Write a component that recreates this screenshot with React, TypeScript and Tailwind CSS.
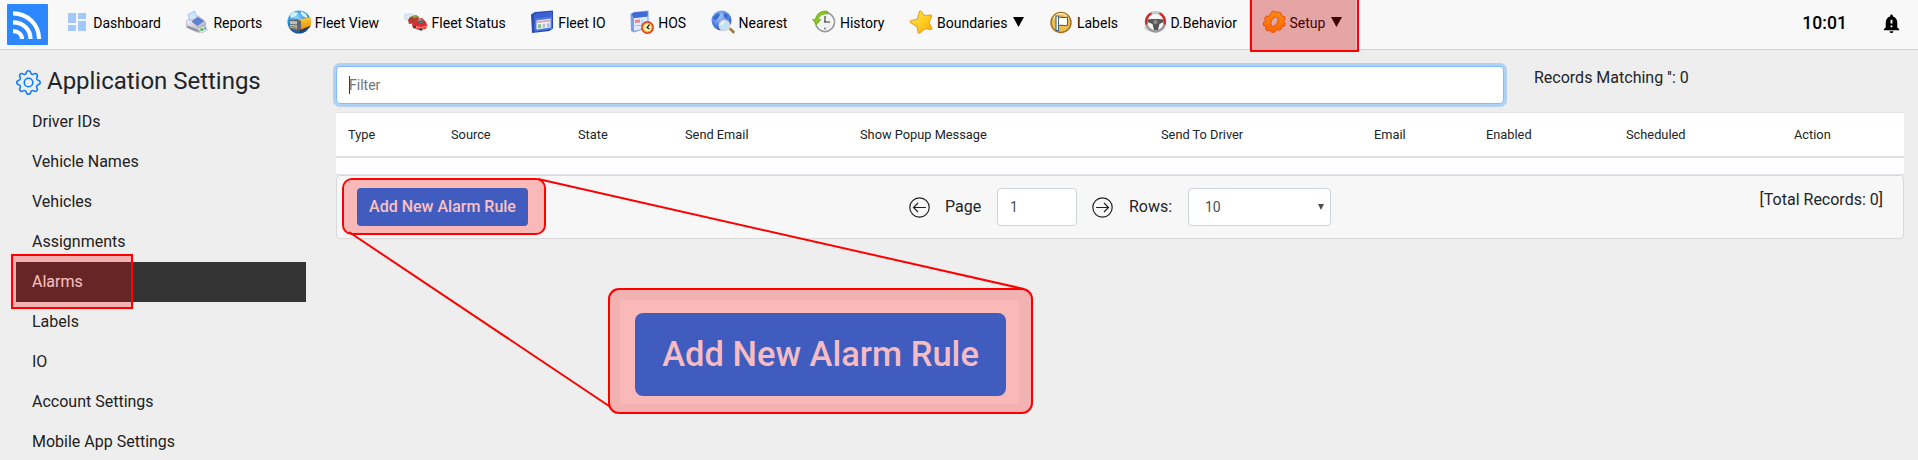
import type { ReactNode } from "react";
import { BsGear } from "react-icons/bs";
import { MdNotificationImportant } from "react-icons/md";

function Icon(props: { children: ReactNode }) {
  return (
    <svg viewBox="0 0 24 24" className="size-6 shrink-0">
      {props.children}
    </svg>
  );
}

function DashboardIcon() {
  return (
    <Icon>
      <path
        fill="#a3c9fb"
        d="M3 3h8v10H3zM13 3h8v6h-8zM3 15h8v6H3zM13 11h8v10h-8z"
      />
    </Icon>
  );
}

function ReportsIcon() {
  return (
    <Icon>
      <defs>
        <linearGradient id="printer" x1="0" y1="0" x2="1" y2="1">
          <stop offset="0" stopColor="#fafaff" />
          <stop offset="1" stopColor="#a0a2b2" />
        </linearGradient>
      </defs>
      <path d="M1.500 11l5-4 7-1 7 6v7l-7 3.500-12-5z" fill="url(#printer)" stroke="#9c9eae" strokeWidth=".6" />
      <path d="M3 4.500L9.500 1l2.500 7-7 2.500z" fill="#d3e6fb" stroke="#86aee4" strokeWidth=".7" />
      <path d="M7 11.500L13 7.500l5.500 3.500-6 4.500z" fill="#5d82d8" stroke="#3b57a4" strokeWidth=".5" />
      <path d="M2.500 15.500l10 4.500v1.800L2.500 17.500z" fill="#85879a" />
      <path d="M12.500 18.500l7.500-2.500 2.500 4-6 3z" fill="#eef4f4" stroke="#999" strokeWidth=".5" />
      <path d="M14.500 19l3-1 1.500 2-2.500 1.200z" fill="#48b84a" />
      <path d="M18.500 17.700l1.500-.5 1.500 1.800-1.500.8z" fill="#3f8ee0" />
    </Icon>
  );
}

function FleetViewIcon() {
  return (
    <Icon>
      <defs>
        <radialGradient id="earth" cx=".4" cy=".3" r=".7">
          <stop offset="0" stopColor="#8fd2fb" />
          <stop offset=".6" stopColor="#2b8edb" />
          <stop offset="1" stopColor="#0c4a96" />
        </radialGradient>
        <linearGradient id="trailer" x1="0" y1="0" x2="0" y2="1">
          <stop offset="0" stopColor="#ffc93e" />
          <stop offset="1" stopColor="#e89000" />
        </linearGradient>
      </defs>
      <circle cx="12" cy="12" r="11.500" fill="url(#earth)" />
      <path d="M3 5l4-3 4 1-2 3-5 2zM14 1l5 3 2 4-4-1-3-3z" fill="#d4f1fb" />
      <path d="M10 10l14-3v9l-10 4-4-2z" fill="url(#trailer)" />
      <path d="M2 10l8-1 4 2v9l-4 1-8-3z" fill="#666" />
      <path d="M3 11l7 .3v3.200L3 14z" fill="#b5c2ca" />
      <path d="M3 15l7 .8v3L3 17.500z" fill="#d9d6c8" />
      <path d="M3.500 16.500l6 1" stroke="#444" strokeWidth=".8" />
      <path d="M12 20.500l11-4.500v1.500l-9 4z" fill="#333" />
    </Icon>
  );
}

function FleetStatusIcon() {
  return (
    <Icon>
      <rect x=".5" y="4" width="9" height="6" rx="2" fill="#dfe8f6" stroke="#b8c6dd" strokeWidth=".6" />
      <path d="M4 10l2-3 6-2 3 2-2 6-8 1z" fill="#b33a36" />
      <path d="M8 6l4-1 2 2-4 1.500z" fill="#86a83a" />
      <path d="M8 14l4-5 6-1 4 4 1.500 4-2 3-7 1-6-3z" fill="#dd2a2a" />
      <path d="M12 12l1.500-2.500 5-.5 2 3-4 1.500z" fill="#5b6b78" />
      <path d="M14.500 10l3-.3" stroke="#e6c34c" />
      <path d="M12 16l6 1 5-2v1.500L18 19l-6-1z" fill="#ff7b70" />
      <circle cx="10.500" cy="17" r="1.500" fill="#444" />
      <circle cx="17" cy="19.200" r="1.500" fill="#444" />
    </Icon>
  );
}

function FleetIoIcon() {
  return (
    <Icon>
      <path d="M1 4.500L5 2l18-1.500v18L19.500 21 2 23z" fill="#2a4bb4" />
      <path d="M4.500 4L22 2v17L4.500 21.500z" fill="#4e7ae0" />
      <path d="M4.500 4L22 2v4.500L4.500 8.500z" fill="#3a62d2" />
      <path d="M6.500 10.500l14-1.700v8.700l-14 2z" fill="#f0f3f8" />
      <path d="M7 11.300l13-1.500v1.700L7 13z" fill="#e59bab" />
      <path d="M8 14.500l3-.4v4l-3 .4z" fill="#7cc487" />
      <path d="M12.500 14l3-.4v4l-3 .4z" fill="#b9c1d1" />
      <path d="M17 13.500l2.500-.3v4l-2.500.3z" fill="#aab9df" />
    </Icon>
  );
}

function HosIcon() {
  return (
    <Icon>
      <path d="M.5 4L4 2l14.500-1.500v17L4 22.500l-3-1.500z" fill="#7d9ee6" />
      <path d="M4 8l13.500-1.500v11L4 21z" fill="#dfeafc" />
      <path d="M1.500 4L4 2.500 17.500 1.500v5L4 8z" fill="#3f69d4" />
      <path d="M5 10l5-.6v3L5 13z" fill="#e88" />
      <path d="M5 15.500h7M12 9.500v6" stroke="#a6bfe8" />
      <circle cx="17.500" cy="17.500" r="5.600" fill="#fff0b0" stroke="#d63b17" strokeWidth="1.600" />
      <circle cx="17.500" cy="17.500" r="4.400" fill="none" stroke="#f79a25" />
      <path d="M19.500 14.500l-2.500 3 2.500 1.500" fill="none" stroke="#222" strokeWidth="1.200" />
    </Icon>
  );
}

function NearestIcon() {
  return (
    <Icon>
      <defs>
        <radialGradient id="globe" cx=".4" cy=".3" r=".7">
          <stop offset="0" stopColor="#a5c6fa" />
          <stop offset=".6" stopColor="#5687e2" />
          <stop offset="1" stopColor="#335abc" />
        </radialGradient>
      </defs>
      <circle cx="10.500" cy="10.500" r="10" fill="url(#globe)" />
      <path d="M3 6l4-3 2 1-1 3-3 3-3-1zM13 3l4 2-1 4-3-2z" fill="#3c69cc" />
      <path d="M17.500 19l2-1.500 4.500 4-1.500 2.500z" fill="#a8743a" />
      <circle cx="13.500" cy="15.500" r="5" fill="#bfe2f6" stroke="#d5d8dc" strokeWidth="1.800" />
      <path d="M10.500 15a3 3 0 013-3" fill="none" stroke="#fff" strokeWidth="1.300" />
    </Icon>
  );
}

function HistoryIcon() {
  return (
    <Icon>
      <circle cx="13" cy="12" r="9.500" fill="#f3f3f3" stroke="#9c9c9c" strokeWidth="1.800" />
      <circle cx="13" cy="12" r="8" fill="none" stroke="#fff" />
      <path d="M13 6v6.500M12 12h6M13 17.500v2M7 12H5.500" stroke="#333" strokeWidth="1.100" />
      <path
        d="M15.500 1.200C9 .3 4.500 3.500 3.500 9.500H.5L4.500 14.500 9 9.500H6.300C7.300 5.500 10 3.800 15.500 4z"
        fill="#8bc81e"
        stroke="#5d9b12"
        strokeWidth=".6"
      />
    </Icon>
  );
}

function StarIcon() {
  return (
    <Icon>
      <defs>
        <linearGradient id="star" x1="0" y1="0" x2="1" y2="1">
          <stop offset="0" stopColor="#fff04a" />
          <stop offset="1" stopColor="#ffae00" />
        </linearGradient>
      </defs>
      <path
        d="M10.500 1.500Q11.500.5 12.200 1.500L15 5.500l7-.5Q23 5.500 22.500 6.500L20 12.500l3 6q0 1-1.500 1L16 18.800 10.500 23Q9 23.500 9 22L8 16.500 1.500 12.500q-1-1.200.5-1.700L8.500 9z"
        fill="url(#star)"
        stroke="#e8a22c"
        strokeWidth="1.100"
        strokeLinejoin="round"
      />
    </Icon>
  );
}

function LabelsIcon() {
  return (
    <Icon>
      <circle cx="12" cy="12.500" r="10" fill="#edbe55" stroke="#ab701d" strokeWidth="1.500" />
      <path d="M4.500 9a8 8 0 0115 0" fill="none" stroke="#ffe9a8" strokeWidth="1.500" />
      <path
        d="M7 6h2.500v1.500c3-1 5 1 9-.5v8c-4 1.500-6-.5-9 .5V20.500H7z"
        fill="#fffef5"
        stroke="#4a6572"
        strokeWidth="1.100"
      />
      <path d="M9.500 7.500v8" stroke="#4a6572" />
    </Icon>
  );
}

function BehaviorIcon() {
  return (
    <Icon>
      <ellipse cx="11" cy="18" rx="10" ry="4" fill="#ddd" />
      <circle cx="12.500" cy="12" r="9.500" fill="#f5f5f5" stroke="#999" strokeWidth="2.400" />
      <path d="M3.500 14.500A9.500 9.500 0 018 3.500M17 3.500a9.500 9.500 0 014.500 11" fill="none" stroke="#d22b2b" strokeWidth="2.400" />
      <path d="M9 2.900a10 10 0 017 0" fill="none" stroke="#ccc" strokeWidth="2.400" />
      <path d="M4.500 9.500l5-.5h6l5 .5v2.500l-4 2-1.500 6h-4L9.500 14l-5-2z" fill="#555" />
      <circle cx="12.500" cy="12" r="2.200" fill="#888" />
    </Icon>
  );
}

function SetupIcon() {
  return (
    <Icon>
      <defs>
        <linearGradient id="cog" x1="0" y1="0" x2="0" y2="1">
          <stop offset="0" stopColor="#ffb81a" />
          <stop offset="1" stopColor="#ff8a00" />
        </linearGradient>
      </defs>
      <path
        fillRule="evenodd"
        fill="url(#cog)"
        stroke="#e0600a"
        strokeWidth=".9"
        strokeLinejoin="round"
        d="M10 1.500l3-.5 1.300 2 2-1.200 3 1.400.2 2.600 3 .7.700 3-1.800 1.800 1.800 2-1 3-2.600.2-.3 2.700-2.800 1.300-2-1.500-1.500 3-3.200.5-1.600-2.300-2.600.8-2.300-2 .8-2.500-2.600-1 0-3.200 2.200-1.200-1.200-2.400 1.800-2.700 2.500.5zM14.500 7.300c-2-.6-4 1.200-5 3.500s-.8 4.800.8 5.400 3.700-.9 4.900-3.200 1-5.100-.7-5.700z"
      />
    </Icon>
  );
}

const NAV = [
  { label: "Dashboard", icon: <DashboardIcon /> },
  { label: "Reports", icon: <ReportsIcon /> },
  { label: "Fleet View", icon: <FleetViewIcon /> },
  { label: "Fleet Status", icon: <FleetStatusIcon /> },
  { label: "Fleet IO", icon: <FleetIoIcon /> },
  { label: "HOS", icon: <HosIcon /> },
  { label: "Nearest", icon: <NearestIcon /> },
  { label: "History", icon: <HistoryIcon /> },
  { label: "Boundaries", icon: <StarIcon />, menu: true },
  { label: "Labels", icon: <LabelsIcon /> },
  { label: "D.Behavior", icon: <BehaviorIcon /> },
  { label: "Setup", icon: <SetupIcon />, menu: true, active: true },
];

const SETTINGS = [
  "Driver IDs",
  "Vehicle Names",
  "Vehicles",
  "Assignments",
  "Alarms",
  "Labels",
  "IO",
  "Account Settings",
  "Mobile App Settings",
];

const COLUMNS = [
  "Type",
  "Source",
  "State",
  "Send Email",
  "Show Popup Message",
  "Send To Driver",
  "Email",
  "Enabled",
  "Scheduled",
  "Action",
];

function NavBar() {
  return (
    <nav className="flex h-[50px] items-center border-b border-[#d0d0d0] bg-[#f8f8f8] pl-[7px] text-sm text-black">
      <svg viewBox="0 0 41 41" className="mr-[5px] size-[41px] shrink-0">
        <rect width="41" height="41" rx="1" fill="#2d87ff" />
        <g fill="none" stroke="#fff" strokeWidth="4.200">
          <path d="M6 9.300C20 9.300 32 20 32 35" />
          <path d="M6 18.300c10 0 17.500 7 17.500 16.700" />
          <path d="M6 27.200c5 0 9 3 9 7.800" />
        </g>
      </svg>
      <div className="flex h-full">
        {NAV.map((item) => (
          <div
            key={item.label}
            className={`flex h-[49px] items-center gap-1 pb-[5px] pl-[12.250px] whitespace-nowrap ${
              item.active ? "bg-[#dcdcdc] pr-3.5" : "pr-[12.250px]"
            }`}
          >
            {item.icon}
            <span className="pt-px">{item.label}</span>
            {item.menu && (
              <svg viewBox="0 0 11 10" className="ml-0.5 h-2.5 w-[11px]">
                <path d="M0 0h11L5.500 10z" />
              </svg>
            )}
          </div>
        ))}
      </div>
      <div className="mr-[19px] ml-auto flex items-center gap-[33px] pb-[3px]">
        <span className="pt-0.5 text-[17.600px] font-medium">10:01</span>
        <MdNotificationImportant className="-mr-1 size-[23px]" />
      </div>
    </nav>
  );
}

function Sidebar() {
  return (
    <aside className="w-[290px] shrink-0">
      <h1 className="flex h-[52px] items-center gap-1.5 pt-2 pb-0 text-2xl tracking-[-0.02px] text-[#212529]">
        <BsGear className="mt-1 size-[25px] text-[#0b7bff]" />
        <span className="pt-px">Application Settings</span>
      </h1>
      <ul>
        {SETTINGS.map((label) => (
          <li
            key={label}
            className={`flex h-10 items-center px-4 ${
              label === "Alarms" ? "bg-[#333] text-white" : "text-[#212121]"
            }`}
          >
            {label}
          </li>
        ))}
      </ul>
    </aside>
  );
}

function PageArrow(props: { back?: boolean }) {
  return (
    <svg
      viewBox="0 0 21 21"
      className={`size-[21px] ${props.back ? "" : "-scale-x-100"}`}
      fill="none"
      stroke="#222"
      strokeWidth="1.200"
    >
      <circle cx="10.500" cy="10.500" r="9.700" />
      <path d="M17 10.500H4.500M9 6l-4.500 4.500L9 15" />
    </svg>
  );
}

function Pager() {
  return (
    <div className="flex h-16 items-center rounded border border-[#d9d9d9] bg-[#f7f7f7] pr-5 pl-5">
      <button className="h-[38px] w-[171px] rounded bg-[#007bff] font-medium text-white">
        Add New Alarm Rule
      </button>
      <div className="ml-[381px] flex items-center">
        <PageArrow back />
        <span className="ml-[15px] w-[52px]">Page</span>
        <div className="flex h-[38px] w-20 items-center rounded border border-[#ced4da] bg-white px-3 text-sm text-[#495057]">
          1
        </div>
        <div className="ml-[15px] flex">
          <PageArrow />
        </div>
        <span className="ml-4 w-[59px]">Rows:</span>
        <div className="flex h-[38px] w-[143px] items-center justify-between rounded border border-[#ced4da] bg-white pr-1.5 pl-4 text-sm text-[#495057]">
          10
          <svg viewBox="0 0 6 6" className="size-1.5" fill="#495057">
            <path d="M0 0h6L3 6z" />
          </svg>
        </div>
      </div>
      <span className="ml-auto pb-3.5">[Total Records: 0]</span>
    </div>
  );
}

function Alarms() {
  return (
    <main className="ml-[30px] w-[1568px] pt-4 text-[#212529]">
      <div className="flex h-[46px]">
        <div className="flex h-[38px] w-[1168px] items-center rounded border border-[#80bdff] bg-white pl-3 text-sm text-[#6c757d] shadow-[0_0_0_3px_rgba(0,123,255,0.25)]">
          <span className="h-[18px] w-px bg-[#333]" />
          <span className="-ml-px">Filter</span>
        </div>
        <span className="ml-[30px]">Records Matching '': 0</span>
      </div>
      <div className="grid h-[46px] grid-cols-[103px_127px_107px_175px_301px_213px_112px_140px_168px_122px] items-center border-t border-b-2 border-[#dee2e6] bg-white text-[12.800px]">
        {COLUMNS.map((name) => (
          <div key={name} className="pl-3">
            {name}
          </div>
        ))}
      </div>
      <div className="h-[17px] border-b border-[#dee2e6] bg-white" />
      <Pager />
    </main>
  );
}

// Red markers drawn over the page, plus the enlarged copy of the button
function Annotations() {
  return (
    <div className="pointer-events-none absolute inset-0">
      <div className="absolute -top-1 left-[1250px] h-14 w-[109px] border-2 border-[#f00] bg-[#f00]/25 bg-clip-padding" />
      <div className="absolute top-[254px] left-[11px] h-[55px] w-[122px] border-2 border-[#f00] bg-[#f00]/25 bg-clip-padding" />
      <div className="absolute top-[178px] left-[342px] h-[57px] w-[204px] rounded-[10px] border-2 border-[#f00] bg-[#f00]/25 bg-clip-padding" />
      <svg
        viewBox="0 0 1918 460"
        className="absolute inset-0 h-[460px] w-[1918px]"
        stroke="#f00"
        strokeWidth="2"
      >
        <path d="M538 179l486 110M349 232l263 176" />
      </svg>
      <div className="absolute top-[288px] left-[608px] h-[126px] w-[425px] rounded-[11px] border-2 border-[#f00] bg-[#f3b2b2] p-2.5">
        <div className="flex h-[104px] w-[399px] items-center justify-center bg-[#f9b9b9]">
          <div className="mt-[5px] ml-0.5 flex h-[83px] w-[371px] items-center justify-center rounded-lg bg-[#405cbf] text-[34.500px] font-medium whitespace-nowrap text-[#f6bcc3]">
            Add New Alarm Rule
          </div>
        </div>
      </div>
    </div>
  );
}

export default function App() {
  return (
    <div className="relative h-[460px] w-[1918px] overflow-hidden bg-[#eee] font-[Roboto,sans-serif]">
      <NavBar />
      <div className="flex pl-4">
        <Sidebar />
        <Alarms />
      </div>
      <Annotations />
    </div>
  );
}
